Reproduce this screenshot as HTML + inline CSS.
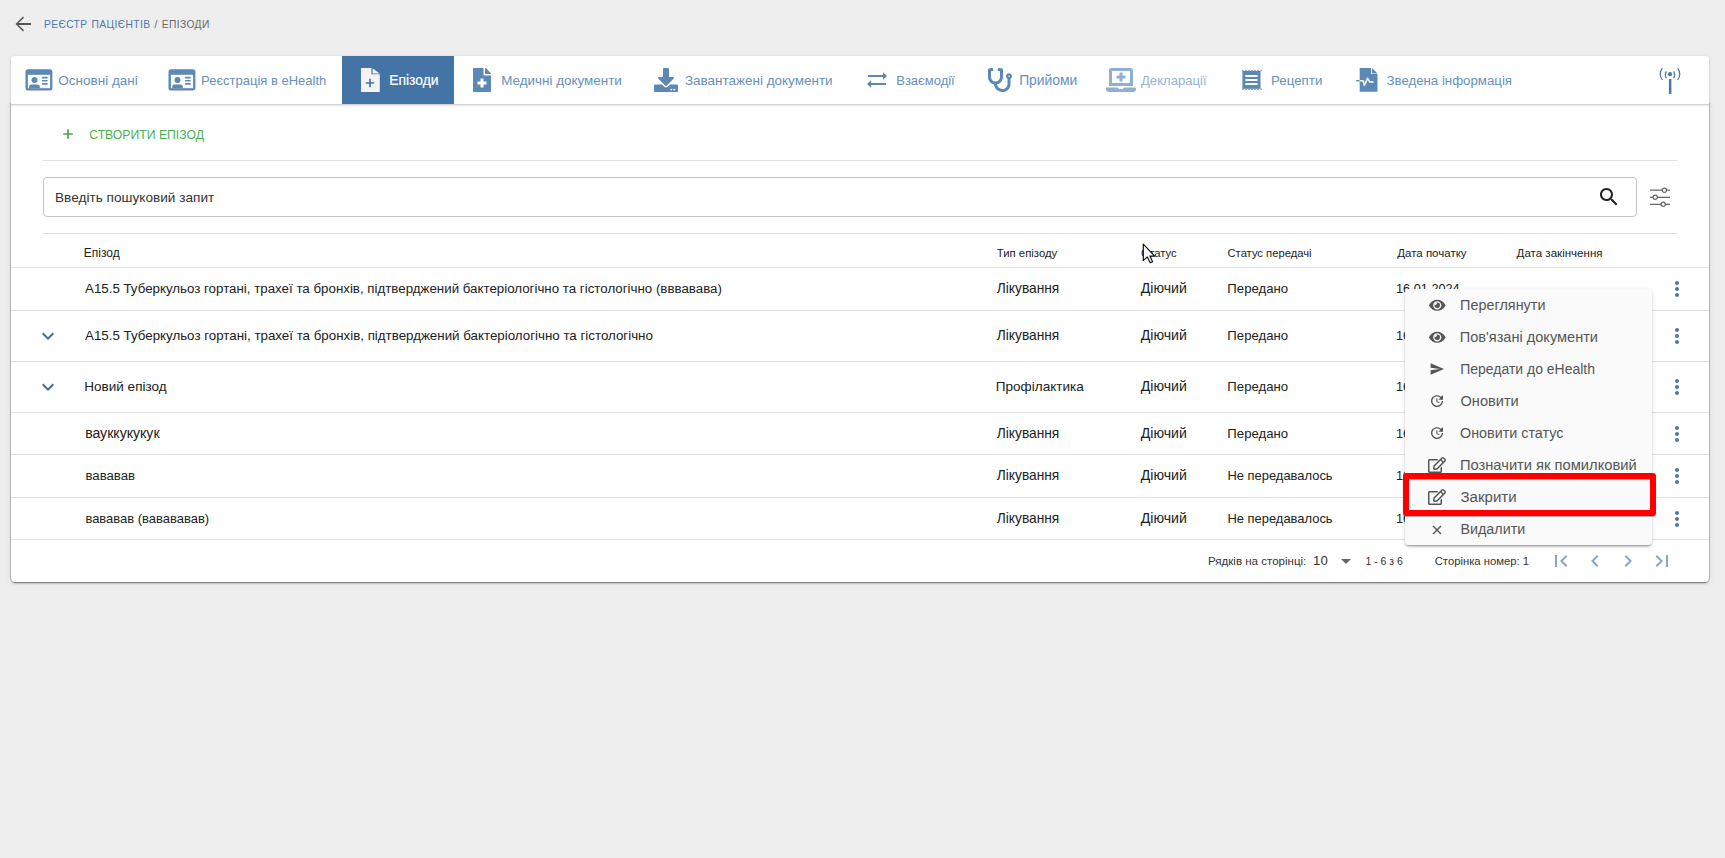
<!DOCTYPE html>
<html><head><meta charset="utf-8"><title>Епізоди</title>
<style>
html,body{margin:0;padding:0;}
body{width:1725px;height:858px;background:#eeeeee;position:relative;overflow:hidden;font-family:"Liberation Sans",sans-serif;}
.a{position:absolute;}
.t{position:absolute;line-height:1;white-space:nowrap;}
.card{background:#fff;border-radius:4px;box-shadow:0 0 0 1px rgba(0,0,0,0.18),0 0 6px rgba(0,0,0,0.1),0px 2px 2px 0px rgba(0,0,0,0.14),0px 3px 1px -2px rgba(0,0,0,0.2);}
svg{display:block;overflow:visible}
</style></head><body>
<svg class="a" style="left:11px;top:12px" width="24" height="24" viewBox="0 0 24 24"><path d="M20 11.1H7.6l5.45-5.45L12 4.5 4.5 12l7.5 7.5 1.05-1.15L7.6 12.9H20z" fill="#555"/></svg>
<div class="t" style="left:43.50px;top:19.31px;font-size:11.400px;color:#4d78a8;letter-spacing:0.42px;word-spacing:1px;transform:scaleX(0.9);transform-origin:0 0;">РЕЄСТР ПАЦІЄНТІВ <span style="color:#666">/ ЕПІЗОДИ</span></div>
<div class="a card" style="left:11px;top:104px;width:1698px;height:478px;border-radius:0 0 4px 4px"></div>
<div class="a" style="left:11px;top:56px;width:1698px;height:48px;background:#fff;border-radius:4px 4px 0 0;box-shadow:0 1px 3px rgba(0,0,0,0.2),0 1px 1px rgba(0,0,0,0.1)"></div>
<div class="a" style="left:11px;top:104px;width:1698px;height:1px;background:#d2d2d2"></div>
<div class="a" style="left:342px;top:56px;width:112px;height:48px;background:#4473a6"></div>
<svg class="a" style="left:25px;top:69px" width="27" height="21" viewBox="0 0 27 21"><rect x="0.5" y="0.3" width="26.9" height="21.2" rx="2.5" fill="#5b88b5"/><rect x="2.9" y="5.8" width="22.2" height="13.4" fill="#fff"/><circle cx="9.5" cy="11" r="3" fill="#5b88b5"/><path d="M4.2 19.2V17.8c0-1.4 1-2.2 2.4-2.2h5.8c1.4 0 2.4.8 2.4 2.2v1.4z" fill="#5b88b5"/><rect x="16.8" y="7.8" width="6" height="1.7" rx=".8" fill="#5b88b5"/><rect x="16.8" y="10.9" width="6" height="1.7" rx=".8" fill="#5b88b5"/><rect x="16.8" y="14" width="6" height="1.7" rx=".8" fill="#5b88b5"/></svg>
<div class="t" style="left:58.31px;top:74.01px;font-size:13.510px;color:#6690bc;">Основні дані</div>
<svg class="a" style="left:168px;top:69px" width="27" height="21" viewBox="0 0 27 21"><rect x="0.5" y="0.3" width="26.9" height="21.2" rx="2.5" fill="#5b88b5"/><rect x="2.9" y="5.8" width="22.2" height="13.4" fill="#fff"/><circle cx="9.5" cy="11" r="3" fill="#5b88b5"/><path d="M4.2 19.2V17.8c0-1.4 1-2.2 2.4-2.2h5.8c1.4 0 2.4.8 2.4 2.2v1.4z" fill="#5b88b5"/><rect x="16.8" y="7.8" width="6" height="1.7" rx=".8" fill="#5b88b5"/><rect x="16.8" y="10.9" width="6" height="1.7" rx=".8" fill="#5b88b5"/><rect x="16.8" y="14" width="6" height="1.7" rx=".8" fill="#5b88b5"/></svg>
<div class="t" style="left:201.07px;top:74.00px;font-size:13.009px;color:#6690bc;">Реєстрація в eHealth</div>
<svg class="a" style="left:361px;top:68px" width="19" height="24" viewBox="0 0 19 24"><path d="M0 0H10.4V6.2H18.8V24H0Z" fill="#f3f3f3"/><path d="M11.6 0.3L18.6 5.4H11.6Z" fill="#f3f3f3"/><path d="M4.8 15H13.2M9 10.8V19.2" stroke="#4473a6" stroke-width="1.7"/></svg>
<div class="t" style="left:389.14px;top:74.01px;font-size:13.903px;color:#ffffff;-webkit-text-stroke:0.2px #fff;">Епізоди</div>
<svg class="a" style="left:473px;top:68px" width="18" height="24" viewBox="0 0 384 512"><path d="M377 105L279.1 7c-4.5-4.5-10.6-7-17-7H256v128h128v-6.1c0-6.3-2.5-12.4-7-16.9zM224 136V0H24C10.7 0 0 10.7 0 24v464c0 13.3 10.7 24 24 24h336c13.3 0 24-10.7 24-24V160H248c-13.2 0-24-10.8-24-24zm64 160v48c0 4.4-3.6 8-8 8h-56v56c0 4.4-3.6 8-8 8h-48c-4.4 0-8-3.6-8-8v-56h-56c-4.4 0-8-3.6-8-8v-48c0-4.4 3.6-8 8-8h56v-56c0-4.4 3.6-8 8-8h48c4.4 0 8 3.6 8 8v56h56c4.4 0 8 3.6 8 8z" fill="#5b88b5"/></svg>
<div class="t" style="left:501.16px;top:74.01px;font-size:13.444px;color:#6690bc;">Медичні документи</div>
<svg class="a" style="left:654px;top:68px" width="24" height="24" viewBox="0 0 512 512"><path d="M216 0h80c13.3 0 24 10.7 24 24v168h87.7c17.8 0 26.7 21.5 14.1 34.1L269.7 378.3c-7.5 7.5-19.8 7.5-27.3 0L90.1 226.1c-12.6-12.6-3.7-34.1 14.1-34.1H192V24c0-13.3 10.7-24 24-24zm296 376v112c0 13.3-10.7 24-24 24H24c-13.3 0-24-10.7-24-24V376c0-13.3 10.7-24 24-24h146.7l49 49c20.1 20.1 52.5 20.1 72.6 0l49-49H488c13.3 0 24 10.7 24 24zm-124 88c0-11-9-20-20-20s-20 9-20 20 9 20 20 20 20-9 20-20zm64 0c0-11-9-20-20-20s-20 9-20 20 9 20 20 20 20-9 20-20z" fill="#5b88b5"/></svg>
<div class="t" style="left:684.99px;top:74.00px;font-size:13.485px;color:#6690bc;">Завантажені документи</div>
<svg class="a" style="left:862px;top:66px" width="30" height="28" viewBox="0 0 30 28"><path d="M6 10H22M8 18H24" stroke="#5b88b5" stroke-width="2"/><path d="M21 6.2L25 10L21 13.8Z M9 14.2L5 18L9 21.8Z" fill="#5b88b5"/></svg>
<div class="t" style="left:896.21px;top:74.01px;font-size:13.036px;color:#6690bc;">Взаємодії</div>
<svg class="a" style="left:988px;top:68px" width="24" height="24" viewBox="0 0 512 512"><path d="M447.1 112c-34.2.5-62.3 28.4-63 62.6-.5 24.3 12.5 45.6 32 56.8V344c0 57.3-50.2 104-112 104-60 0-109.2-44.1-111.9-99.2C265 333.8 320 269.2 320 192V36.6c0-11.4-8.1-21.3-19.3-23.5L237.8.5c-13-2.6-25.6 5.8-28.2 18.8L206.4 35c-2.6 13 5.8 25.6 18.8 28.2l30.7 6.1v121.4c0 52.9-42.2 96.7-95.1 97.2-53.4.5-96.9-42.7-96.9-96V69.4l30.7-6.1c13-2.6 21.4-15.2 18.8-28.2l-3.1-15.7C107.7 6.4 95.1-2 82.1.6L19.3 13C8.1 15.3 0 25.1 0 36.6V192c0 77.3 55.1 142 128.1 156.8C130.7 439.2 208.6 512 304 512c97 0 176-75.4 176-168V231.4c19.1-11.1 32-31.7 32-55.4 0-35.7-29.2-64.5-64.9-64zm.9 80c-8.8 0-16-7.2-16-16s7.2-16 16-16 16 7.2 16 16-7.2 16-16 16z" fill="#5b88b5"/></svg>
<div class="t" style="left:1019.16px;top:74.00px;font-size:13.877px;color:#6690bc;">Прийоми</div>
<svg class="a" style="left:1106px;top:68px" width="30" height="24" viewBox="0 0 640 512"><path d="M232 224h56v56a8 8 0 0 0 8 8h48a8 8 0 0 0 8-8v-56h56a8 8 0 0 0 8-8v-48a8 8 0 0 0-8-8h-56v-56a8 8 0 0 0-8-8h-48a8 8 0 0 0-8 8v56h-56a8 8 0 0 0-8 8v48a8 8 0 0 0 8 8zM576 48a48.14 48.14 0 0 0-48-48H112a48.14 48.14 0 0 0-48 48v336h512zm-64 272H128V64h384zm112 96H376c-.77 19.81-14.7 32-32.74 32H288c-18.690 0-33-17.470-32.750-32H16a16 16 0 0 0-16 16v16a64.19 64.19 0 0 0 64 64h512a64.19 64.19 0 0 0 64-64v-16a16 16 0 0 0-16-16z" fill="#8fb0d3"/></svg>
<div class="t" style="left:1141.00px;top:74.00px;font-size:13.101px;color:#94b3d4;">Декларації</div>
<svg class="a" style="left:1242px;top:69px" width="19" height="22" viewBox="0 0 19 22"><rect x="0.4" y="2" width="18.1" height="17.8" fill="#5b88b5"/><rect x="0.40" y="0.9" width="1.2" height="1.3" fill="#5b88b5"/><rect x="0.40" y="19.6" width="1.2" height="1.4" fill="#5b88b5"/><rect x="3.42" y="0.9" width="1.2" height="1.3" fill="#5b88b5"/><rect x="3.42" y="19.6" width="1.2" height="1.4" fill="#5b88b5"/><rect x="6.44" y="0.9" width="1.2" height="1.3" fill="#5b88b5"/><rect x="6.44" y="19.6" width="1.2" height="1.4" fill="#5b88b5"/><rect x="9.46" y="0.9" width="1.2" height="1.3" fill="#5b88b5"/><rect x="9.46" y="19.6" width="1.2" height="1.4" fill="#5b88b5"/><rect x="12.48" y="0.9" width="1.2" height="1.3" fill="#5b88b5"/><rect x="12.48" y="19.6" width="1.2" height="1.4" fill="#5b88b5"/><rect x="15.50" y="0.9" width="1.2" height="1.3" fill="#5b88b5"/><rect x="15.50" y="19.6" width="1.2" height="1.4" fill="#5b88b5"/><rect x="18.52" y="0.9" width="1.2" height="1.3" fill="#5b88b5"/><rect x="18.52" y="19.6" width="1.2" height="1.4" fill="#5b88b5"/><rect x="3.3" y="6" width="12.4" height="1.9" rx=".5" fill="#fff"/><rect x="3.3" y="10" width="12.4" height="1.9" rx=".5" fill="#fff"/><rect x="3.3" y="14" width="12.4" height="1.9" rx=".5" fill="#fff"/></svg>
<div class="t" style="left:1271.00px;top:74.00px;font-size:13.323px;color:#6690bc;">Рецепти</div>
<svg class="a" style="left:1355px;top:68px" width="24" height="24" viewBox="0 0 24 24"><path d="M4.7 0H16V6H22.5V23.7H4.7Z" fill="#5b88b5"/><path d="M17 0L22.5 5.5H17Z" fill="#5b88b5"/><path d="M4.7 12.7H8.1L9.4 17.4L12.6 10.3L14.7 14H18.6" fill="none" stroke="#fff" stroke-width="1.5" stroke-linejoin="round"/><path d="M1.3 12.7H4.5" stroke="#5b88b5" stroke-width="1.5"/></svg>
<div class="t" style="left:1386.49px;top:74.00px;font-size:13.269px;color:#6690bc;">Зведена інформація</div>
<svg class="a" style="left:1659px;top:68px" width="23" height="27" viewBox="0 0 23 27"><circle cx="11" cy="6.2" r="2.1" fill="#4a77a8"/><rect x="9.9" y="11" width="2.5" height="15" fill="#4a77a8"/><path d="M3.3 0.2Q-0.9 6.1 3.3 12M18.7 0.2Q22.9 6.1 18.7 12M7.3 3.2Q5.3 6.7 7.3 10.2M14.7 3.2Q16.7 6.7 14.7 10.2" fill="none" stroke="#4a77a8" stroke-width="1.2"/></svg>
<svg class="a" style="left:62px;top:128px" width="12" height="12" viewBox="0 0 12 12"><path d="M6 1.2V10.8M1.2 6H10.8" stroke="#47a54b" stroke-width="1.7"/></svg>
<div class="t" style="left:89.24px;top:128.81px;font-size:12.224px;color:#4caf50;">СТВОРИТИ ЕПІЗОД</div>
<div class="a" style="left:43px;top:160px;width:1634px;height:1px;background:#e0e0e0"></div>
<div class="a" style="left:43px;top:177px;width:1592px;height:38px;border:1px solid #c4c4c4;border-radius:4px"></div>
<div class="t" style="left:55.04px;top:190.51px;font-size:13.641px;color:#333;">Введіть пошуковий запит</div>
<svg class="a" style="left:1597px;top:185px" width="24" height="24" viewBox="0 0 24 24"><path d="M15.5 14h-.79l-.28-.27C15.41 12.59 16 11.11 16 9.5 16 5.91 13.09 3 9.5 3S3 5.91 3 9.5 5.91 16 9.5 16c1.61 0 3.090-.59 4.23-1.57l.27.28v.79l5 4.99L20.49 19l-4.99-5zm-6 0C7.01 14 5 11.99 5 9.5S7.01 5 9.5 5 14 7.010 14 9.5 11.990 14 9.5 14z" fill="#222"/></svg>
<svg class="a" style="left:1648px;top:186px" width="24" height="22" viewBox="0 0 24 22"><g stroke="#666" stroke-width="1.2" fill="none"><path d="M2 4.2H14.3M18.5 4.2H22M2 11.3H5.1M9.3 11.3H22M2 18.3H13.1M17.3 18.3H22"/><circle cx="16.4" cy="4.2" r="2.1"/><circle cx="7.2" cy="11.3" r="2.1"/><circle cx="15.2" cy="18.3" r="2.1"/></g></svg>
<div class="a" style="left:43px;top:233px;width:1634px;height:1px;background:#e0e0e0"></div>
<div class="t" style="left:83.73px;top:247.01px;font-size:12.015px;color:#222;">Епізод</div>
<div class="t" style="left:996.80px;top:248.01px;font-size:11.357px;color:#222;">Тип епізоду</div>
<div class="t" style="left:1141.00px;top:248.01px;font-size:11.300px;color:#222;">Статус</div>
<div class="t" style="left:1227.53px;top:248.01px;font-size:11.231px;color:#222;">Статус передачі</div>
<div class="t" style="left:1397.22px;top:248.00px;font-size:11.510px;color:#222;">Дата початку</div>
<div class="t" style="left:1516.60px;top:248.01px;font-size:11.555px;color:#222;">Дата закінчення</div>
<div class="a" style="left:11px;top:267px;width:1698px;height:1px;background:#e0e0e0"></div>
<div class="a" style="left:11px;top:310px;width:1698px;height:1px;background:#e0e0e0"></div>
<div class="a" style="left:11px;top:361px;width:1698px;height:1px;background:#e0e0e0"></div>
<div class="a" style="left:11px;top:412px;width:1698px;height:1px;background:#e0e0e0"></div>
<div class="a" style="left:11px;top:454px;width:1698px;height:1px;background:#e0e0e0"></div>
<div class="a" style="left:11px;top:497px;width:1698px;height:1px;background:#e0e0e0"></div>
<div class="a" style="left:11px;top:539px;width:1698px;height:1px;background:#e0e0e0"></div>
<div class="t" style="left:85.00px;top:282.00px;font-size:13.321px;color:#212121;">А15.5 Туберкульоз гортані, трахеї та бронхів, підтверджений бактеріологічно та гістологічно (вввавава)</div>
<div class="t" style="left:996.77px;top:282.01px;font-size:13.760px;color:#212121;">Лікування</div>
<div class="t" style="left:1140.77px;top:281.00px;font-size:14.139px;color:#212121;">Діючий</div>
<div class="t" style="left:1227.36px;top:282.01px;font-size:13.176px;color:#212121;">Передано</div>
<div class="t" style="left:1396.03px;top:283.00px;font-size:12.730px;color:#212121;">16.01.2024</div>
<svg class="a" style="left:1664.6px;top:276.6px" width="24" height="24" viewBox="0 0 24 24"><path d="M12 8c1.1 0 2-.9 2-2s-.9-2-2-2-2 .9-2 2 .9 2 2 2zm0 2c-1.1 0-2 .9-2 2s.9 2 2 2 2-.9 2-2-.9-2-2-2zm0 6c-1.1 0-2 .9-2 2s.9 2 2 2 2-.9 2-2-.9-2-2-2z" fill="#4a77a8"/></svg>
<div class="t" style="left:85.00px;top:329.01px;font-size:13.347px;color:#212121;">А15.5 Туберкульоз гортані, трахеї та бронхів, підтверджений бактеріологічно та гістологічно</div>
<div class="t" style="left:996.77px;top:329.01px;font-size:13.760px;color:#212121;">Лікування</div>
<div class="t" style="left:1140.77px;top:328.00px;font-size:14.139px;color:#212121;">Діючий</div>
<div class="t" style="left:1227.36px;top:329.01px;font-size:13.176px;color:#212121;">Передано</div>
<div class="t" style="left:1396.03px;top:330.00px;font-size:12.730px;color:#212121;">16.01.2024</div>
<svg class="a" style="left:36px;top:324.4px" width="24" height="24" viewBox="0 0 24 24"><path d="M16.59 8.59L12 13.17 7.41 8.59 6 10l6 6 6-6z" fill="#3b6fa8"/></svg>
<svg class="a" style="left:1664.6px;top:324.0px" width="24" height="24" viewBox="0 0 24 24"><path d="M12 8c1.1 0 2-.9 2-2s-.9-2-2-2-2 .9-2 2 .9 2 2 2zm0 2c-1.1 0-2 .9-2 2s.9 2 2 2 2-.9 2-2-.9-2-2-2zm0 6c-1.1 0-2 .9-2 2s.9 2 2 2 2-.9 2-2-.9-2-2-2z" fill="#4a77a8"/></svg>
<div class="t" style="left:84.36px;top:380.00px;font-size:13.507px;color:#212121;">Новий епізод</div>
<div class="t" style="left:995.82px;top:380.01px;font-size:13.554px;color:#212121;">Профілактика</div>
<div class="t" style="left:1140.77px;top:379.00px;font-size:14.139px;color:#212121;">Діючий</div>
<div class="t" style="left:1227.36px;top:380.01px;font-size:13.176px;color:#212121;">Передано</div>
<div class="t" style="left:1396.03px;top:381.00px;font-size:12.730px;color:#212121;">16.01.2024</div>
<svg class="a" style="left:36px;top:375.4px" width="24" height="24" viewBox="0 0 24 24"><path d="M16.59 8.59L12 13.17 7.41 8.59 6 10l6 6 6-6z" fill="#3b6fa8"/></svg>
<svg class="a" style="left:1664.6px;top:375.0px" width="24" height="24" viewBox="0 0 24 24"><path d="M12 8c1.1 0 2-.9 2-2s-.9-2-2-2-2 .9-2 2 .9 2 2 2zm0 2c-1.1 0-2 .9-2 2s.9 2 2 2 2-.9 2-2-.9-2-2-2zm0 6c-1.1 0-2 .9-2 2s.9 2 2 2 2-.9 2-2-.9-2-2-2z" fill="#4a77a8"/></svg>
<div class="t" style="left:85.14px;top:426.01px;font-size:14.092px;color:#212121;">вауккукукук</div>
<div class="t" style="left:996.77px;top:427.01px;font-size:13.760px;color:#212121;">Лікування</div>
<div class="t" style="left:1140.77px;top:426.00px;font-size:14.139px;color:#212121;">Діючий</div>
<div class="t" style="left:1227.36px;top:427.01px;font-size:13.176px;color:#212121;">Передано</div>
<div class="t" style="left:1396.03px;top:428.00px;font-size:12.730px;color:#212121;">16.01.2024</div>
<svg class="a" style="left:1664.6px;top:421.5px" width="24" height="24" viewBox="0 0 24 24"><path d="M12 8c1.1 0 2-.9 2-2s-.9-2-2-2-2 .9-2 2 .9 2 2 2zm0 2c-1.1 0-2 .9-2 2s.9 2 2 2 2-.9 2-2-.9-2-2-2zm0 6c-1.1 0-2 .9-2 2s.9 2 2 2 2-.9 2-2-.9-2-2-2z" fill="#4a77a8"/></svg>
<div class="t" style="left:85.41px;top:469.01px;font-size:13.224px;color:#212121;">вававав</div>
<div class="t" style="left:996.77px;top:469.01px;font-size:13.760px;color:#212121;">Лікування</div>
<div class="t" style="left:1140.77px;top:468.00px;font-size:14.139px;color:#212121;">Діючий</div>
<div class="t" style="left:1227.41px;top:470.01px;font-size:12.943px;color:#212121;">Не передавалось</div>
<div class="t" style="left:1396.03px;top:470.00px;font-size:12.730px;color:#212121;">16.01.2024</div>
<svg class="a" style="left:1664.6px;top:464.0px" width="24" height="24" viewBox="0 0 24 24"><path d="M12 8c1.1 0 2-.9 2-2s-.9-2-2-2-2 .9-2 2 .9 2 2 2zm0 2c-1.1 0-2 .9-2 2s.9 2 2 2 2-.9 2-2-.9-2-2-2zm0 6c-1.1 0-2 .9-2 2s.9 2 2 2 2-.9 2-2-.9-2-2-2z" fill="#4a77a8"/></svg>
<div class="t" style="left:85.42px;top:512.01px;font-size:12.981px;color:#212121;">вававав (вавававав)</div>
<div class="t" style="left:996.77px;top:512.01px;font-size:13.760px;color:#212121;">Лікування</div>
<div class="t" style="left:1140.77px;top:511.00px;font-size:14.139px;color:#212121;">Діючий</div>
<div class="t" style="left:1227.41px;top:513.01px;font-size:12.943px;color:#212121;">Не передавалось</div>
<div class="t" style="left:1396.03px;top:513.00px;font-size:12.730px;color:#212121;">16.01.2024</div>
<svg class="a" style="left:1664.6px;top:506.5px" width="24" height="24" viewBox="0 0 24 24"><path d="M12 8c1.1 0 2-.9 2-2s-.9-2-2-2-2 .9-2 2 .9 2 2 2zm0 2c-1.1 0-2 .9-2 2s.9 2 2 2 2-.9 2-2-.9-2-2-2zm0 6c-1.1 0-2 .9-2 2s.9 2 2 2 2-.9 2-2-.9-2-2-2z" fill="#4a77a8"/></svg>
<div class="t" style="left:1208.02px;top:556.01px;font-size:11.544px;color:#333;">Рядків на сторінці:</div>
<div class="t" style="left:1313.11px;top:554.20px;font-size:13.159px;color:#333;">10</div>
<svg class="a" style="left:1334px;top:549px" width="24" height="24" viewBox="0 0 24 24"><path d="M7 10l5 5 5-5z" fill="#666"/></svg>
<div class="t" style="left:1365.44px;top:557.01px;font-size:10.467px;color:#333;">1 - 6 з 6</div>
<div class="t" style="left:1434.73px;top:556.01px;font-size:11.282px;color:#333;">Сторінка номер: 1</div>
<svg class="a" style="left:1549.4px;top:549px" width="24" height="24" viewBox="0 0 24 24"><path d="M18.41 16.59L13.82 12l4.59-4.59L17 6l-6 6 6 6zM6 6h2v12H6z" fill="#84a7cc"/></svg>
<svg class="a" style="left:1583px;top:549px" width="24" height="24" viewBox="0 0 24 24"><path d="M15.41 7.41L14 6l-6 6 6 6 1.41-1.41L10.83 12z" fill="#84a7cc"/></svg>
<svg class="a" style="left:1616.4px;top:549px" width="24" height="24" viewBox="0 0 24 24"><path d="M10 6L8.59 7.41 13.17 12l-4.58 4.59L10 18l6-6z" fill="#84a7cc"/></svg>
<svg class="a" style="left:1650px;top:549px" width="24" height="24" viewBox="0 0 24 24"><path d="M5.59 7.41L10.18 12l-4.59 4.59L7 18l6-6-6-6zM16 6h2v12h-2z" fill="#84a7cc"/></svg>
<div class="a" style="left:1405px;top:289px;width:247px;height:256px;background:#fafafa;border-radius:4px;box-shadow:0px 3px 1px -2px rgba(0,0,0,0.2),0px 2px 2px 0px rgba(0,0,0,0.14),0px 1px 5px 0px rgba(0,0,0,0.12)"></div>
<div class="t" style="left:1460.12px;top:298.01px;font-size:14.416px;color:#555;">Переглянути</div>
<svg class="a" style="left:1428.7px;top:297.7px" width="16.5" height="14.67" viewBox="0 0 576 512"><path d="M572.52 241.4C518.29 135.59 410.93 64 288 64S57.68 135.64 3.48 241.41a32.35 32.35 0 0 0 0 29.19C57.71 376.41 165.07 448 288 448s230.32-71.64 284.52-177.41a32.35 32.35 0 0 0 0-29.19zM288 400a144 144 0 1 1 144-144 143.93 143.93 0 0 1-144 144zm0-240a95.31 95.31 0 0 0-25.31 3.79 47.85 47.85 0 0 1-66.9 66.9A95.78 95.78 0 1 0 288 160z" fill="#555"/></svg>
<div class="t" style="left:1459.71px;top:330.00px;font-size:14.578px;color:#555;">Пов'язані документи</div>
<svg class="a" style="left:1428.7px;top:329.7px" width="16.5" height="14.67" viewBox="0 0 576 512"><path d="M572.52 241.4C518.29 135.59 410.93 64 288 64S57.68 135.64 3.48 241.41a32.35 32.35 0 0 0 0 29.19C57.71 376.41 165.07 448 288 448s230.32-71.64 284.52-177.41a32.35 32.35 0 0 0 0-29.19zM288 400a144 144 0 1 1 144-144 143.93 143.93 0 0 1-144 144zm0-240a95.31 95.31 0 0 0-25.31 3.79 47.85 47.85 0 0 1-66.9 66.9A95.78 95.78 0 1 0 288 160z" fill="#555"/></svg>
<div class="t" style="left:1460.26px;top:363.00px;font-size:13.973px;color:#555;">Передати до eHealth</div>
<svg class="a" style="left:1430px;top:362px" width="14" height="14" viewBox="1 2 22 20"><path d="M2.01 21L23 12 2.01 3 2 10l15 2-15 2z" fill="#555"/></svg>
<div class="t" style="left:1460.56px;top:394.01px;font-size:14.572px;color:#555;">Оновити</div>
<svg class="a" style="left:1429px;top:393px" width="16" height="16" viewBox="0 0 24 24"><path d="M21 10.12h-6.78l2.74-2.82c-2.73-2.7-7.15-2.8-9.88-.1-2.73 2.71-2.730 7.08 0 9.79s7.15 2.71 9.88 0C18.32 15.65 19 14.08 19 12.1h2c0 1.98-.88 4.55-2.64 6.29-3.51 3.48-9.21 3.48-12.72 0-3.5-3.47-3.53-9.11-.02-12.58s9.14-3.47 12.65 0L21 3v7.12zM12.5 8v4.25l3.5 2.08-.72 1.21L11 13V8h1.5z" fill="#555"/></svg>
<div class="t" style="left:1460.07px;top:426.00px;font-size:14.339px;color:#555;">Оновити статус</div>
<svg class="a" style="left:1429px;top:425px" width="16" height="16" viewBox="0 0 24 24"><path d="M21 10.12h-6.78l2.74-2.82c-2.73-2.7-7.15-2.8-9.88-.1-2.73 2.71-2.730 7.08 0 9.79s7.15 2.71 9.88 0C18.32 15.65 19 14.08 19 12.1h2c0 1.98-.88 4.55-2.64 6.29-3.51 3.48-9.21 3.48-12.72 0-3.5-3.47-3.53-9.11-.02-12.58s9.14-3.47 12.65 0L21 3v7.12zM12.5 8v4.25l3.5 2.08-.72 1.21L11 13V8h1.5z" fill="#555"/></svg>
<div class="t" style="left:1459.93px;top:458.01px;font-size:14.711px;color:#555;">Позначити як помилковий</div>
<svg class="a" style="left:1428px;top:457px" width="18" height="16" viewBox="0 0 576 512"><path d="M402.3 344.9l32-32c5-5 13.7-1.5 13.7 5.7V464c0 26.5-21.5 48-48 48H48c-26.5 0-48-21.5-48-48V112c0-26.5 21.5-48 48-48h273.5c7.1 0 10.7 8.6 5.7 13.7l-32 32c-1.5 1.5-3.5 2.3-5.7 2.3H48v352h352V350.5c0-2.1.8-4.1 2.3-5.6zm156.6-201.8L296.3 405.7l-90.4 10c-26.2 2.9-48.5-19.2-45.6-45.6l10-90.4L432.9 17.1c22.9-22.9 59.9-22.9 82.7 0l43.2 43.2c22.9 22.9 22.9 60 .1 82.8zM460.1 174L402 115.9 216.2 301.8l-7.3 65.3 65.3-7.3L460.1 174zm64.8-79.7l-43.2-43.2c-4.1-4.1-10.8-4.1-14.8 0L436 82l58.1 58.1 30.9-30.9c4-4.2 4-10.8-.1-14.9z" fill="#555"/></svg>
<div class="t" style="left:1460.49px;top:489.00px;font-size:15.054px;color:#555;">Закрити</div>
<svg class="a" style="left:1428px;top:489px" width="18" height="16" viewBox="0 0 576 512"><path d="M402.3 344.9l32-32c5-5 13.7-1.5 13.7 5.7V464c0 26.5-21.5 48-48 48H48c-26.5 0-48-21.5-48-48V112c0-26.5 21.5-48 48-48h273.5c7.1 0 10.7 8.6 5.7 13.7l-32 32c-1.5 1.5-3.5 2.3-5.7 2.3H48v352h352V350.5c0-2.1.8-4.1 2.3-5.6zm156.6-201.8L296.3 405.7l-90.4 10c-26.2 2.9-48.5-19.2-45.6-45.6l10-90.4L432.9 17.1c22.9-22.9 59.9-22.9 82.7 0l43.2 43.2c22.9 22.9 22.9 60 .1 82.8zM460.1 174L402 115.9 216.2 301.8l-7.3 65.3 65.3-7.3L460.1 174zm64.8-79.7l-43.2-43.2c-4.1-4.1-10.8-4.1-14.8 0L436 82l58.1 58.1 30.9-30.9c4-4.2 4-10.8-.1-14.9z" fill="#555"/></svg>
<div class="t" style="left:1460.44px;top:522.01px;font-size:14.329px;color:#555;">Видалити</div>
<svg class="a" style="left:1432px;top:524.7px" width="10" height="10" viewBox="0 0 10 10"><path d="M1 1L9 9M9 1L1 9" stroke="#555" stroke-width="1.4"/></svg>
<div class="a" style="left:1403px;top:473px;width:241px;height:31px;border:6px solid #ff0000;border-radius:3px;box-shadow:0 1px 1px rgba(0,0,0,0.35), inset 0 1px 1px rgba(0,0,0,0.35)"></div>
<svg class="a" style="left:1142px;top:243px" width="16" height="22" viewBox="0 0 16 22"><path d="M1.3 1.1V17.6L5.3 13.9L8.2 19.8L10.6 18.7L7.9 13.1H12.7Z" fill="#fff" stroke="#111" stroke-width="1.2" stroke-linejoin="round"/></svg>
</body></html>
